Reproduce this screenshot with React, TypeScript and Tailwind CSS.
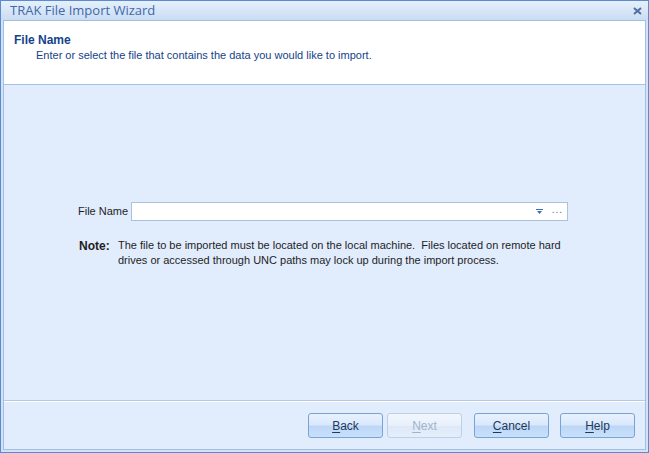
import React from 'react';

const font = { fontFamily: '"Liberation Sans", Arial, sans-serif' };

function WizardButton({ label, hot, disabled }: { label: string; hot: string; disabled?: boolean }) {
  const rest = label.slice(1);
  return (
    <button
      className={
        'w-[75px] h-[25px] rounded-[3px] border text-[12px] flex items-center justify-center ' +
        (disabled
          ? 'border-[#bcd0e8] bg-[linear-gradient(#f2f7fd,#e8f0fb_50%,#dde8f7_51%,#e6eefa)] text-[#9fb3cc]'
          : 'border-[#7ba2d6] bg-[linear-gradient(#e8f2fe,#d9e8fb_48%,#bcd7f6_52%,#c9e0fa)] text-[#1e395b]')
      }
    >
      <span className="underline underline-offset-2">{hot}</span>
      {rest}
    </button>
  );
}

export default function App() {
  return (
    <div className="w-[649px] h-[453px] bg-[#d3e2f6] border border-[#5a8bce] flex flex-col" style={font}>
      {/* Title bar */}
      <div className="h-[19px] flex items-center justify-between pl-[9px] pr-[6px] bg-gradient-to-b from-[#e6f0fc] to-[#cbdcf3]">
        <span className="text-[13px] text-[#3e6aa8]" style={{ fontFamily: '"Open Sans", "Liberation Sans", sans-serif' }}>
          TRAK File Import Wizard
        </span>
        <svg width="9" height="8" viewBox="0 0 9 8">
          <path d="M1 1 L8 7 M8 1 L1 7" stroke="#4d6f9e" strokeWidth="2" />
        </svg>
      </div>

      {/* Client area */}
      <div className="flex-1 flex flex-col mx-[2px] mb-[2px] border border-[#9fc0e6] bg-[#e1ecfd]">
        {/* Header */}
        <div className="h-[64px] bg-white border-b border-[#a7c2e4] pl-[10px] pt-[12px]">
          <div className="text-[12px] font-bold text-[#15428b] leading-[14px]">File Name</div>
          <div className="text-[11px] text-[#15428b] leading-[14px] mt-[1px] pl-[22px]">
            Enter or select the file that contains the data you would like to import.
          </div>
        </div>

        {/* Body */}
        <div className="flex-1 flex flex-col justify-center pl-[74px] pb-[15px]">
          <div className="flex items-center">
            <span className="text-[11px] text-[#1e1e1e] w-[53px]">File Name</span>
            <div className="w-[437px] h-[19px] bg-white border border-[#abc1de] flex items-center justify-end pr-[4px] gap-[9px]">
              <svg width="7" height="5" viewBox="0 0 7 5">
                <path d="M0 0 H7 V1 H0 Z M1 2 H6 L3.5 5 Z" fill="#3d6db1" />
              </svg>
              <span className="text-[10px] text-[#3d6db1] leading-none tracking-[1px] -mt-[4px]">...</span>
            </div>
          </div>
          <div className="flex mt-[17px]">
            <span className="text-[12px] font-bold text-[#1e1e1e] w-[40px] pl-[1px] leading-[16px]">Note:</span>
            <p className="text-[11px] text-[#1e1e1e] leading-[15px] w-[445px]">
              The file to be imported must be located on the local machine.&nbsp; Files located on remote hard drives or accessed through UNC paths may lock up during the import process.
            </p>
          </div>
        </div>

        {/* Footer */}
        <div className="h-[49px] border-t border-[#b7c9de] shadow-[inset_0_1px_0_#ffffff] flex items-center justify-end gap-[11px] pr-[10px] pt-[1px]">
          <div className="flex gap-[4px] mr-[1px]">
            <WizardButton label="Back" hot="B" />
            <WizardButton label="Next" hot="N" disabled />
          </div>
          <WizardButton label="Cancel" hot="C" />
          <WizardButton label="Help" hot="H" />
        </div>
      </div>
    </div>
  );
}
